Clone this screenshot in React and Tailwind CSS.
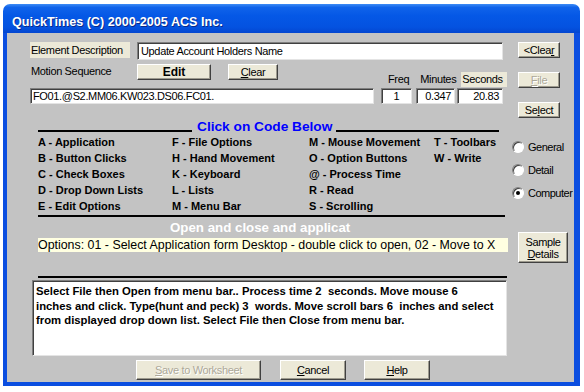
import React from "react";

const FONT = { fontFamily: '"Liberation Sans", Arial, sans-serif' };

function Btn({ children, className = "", disabled = false, bold = false }) {
  return (
    <div
      className={
        "flex items-center justify-center bg-[#ece9d8] border border-t-white border-l-white border-r-[#404040] border-b-[#404040] shadow-[inset_-1px_-1px_0_#9d9a8e] leading-[12px] text-center whitespace-nowrap " +
        (disabled ? "text-[#aca899] [text-shadow:1px_1px_0_#fff] " : "text-black ") +
        (bold ? "font-bold text-[12px] " : "text-[11px] tracking-[-0.35px] ") +
        className
      }
    >
      {children}
    </div>
  );
}

function Input({ children, className = "" }) {
  return (
    <div
      className={
        "bg-white border border-t-[#7f7f7f] border-l-[#7f7f7f] border-r-[#e4e4e4] border-b-[#e4e4e4] shadow-[inset_1px_1px_0_#404040] text-[11px] tracking-[-0.35px] leading-[14px] text-black overflow-hidden whitespace-nowrap " +
        className
      }
    >
      {children}
    </div>
  );
}

function Radio({ label, checked }) {
  return (
    <div className="flex items-center h-[14px]">
      <div className="w-[12px] h-[12px] rounded-full bg-white border border-t-[#808080] border-l-[#808080] border-r-white border-b-white shadow-[inset_1px_1px_0_#404040] flex items-center justify-center">
        {checked && <div className="w-[4px] h-[4px] rounded-full bg-black" />}
      </div>
      <span className="ml-[4px] text-[11px] tracking-[-0.5px] leading-[14px] text-black whitespace-nowrap">{label}</span>
    </div>
  );
}

const codes = [
  ["A - Application", "F - File Options", "M - Mouse Movement", "T - Toolbars"],
  ["B - Button Clicks", "H - Hand Movement", "O - Option Buttons", "W - Write"],
  ["C - Check Boxes", "K - Keyboard", "@ - Process Time", ""],
  ["D - Drop Down Lists", "L - Lists", "R - Read", ""],
  ["E - Edit Options", "M - Menu Bar", "S - Scrolling", ""],
];

export default function App() {
  return (
    <div className="w-[584px] h-[392px] bg-white overflow-hidden" style={FONT}>
      <div className="ml-[3px] mt-[4px] w-[577px] h-[382px] flex flex-col rounded-t-[7px] overflow-hidden">
        {/* Title bar */}
        <div className="h-[29px] shrink-0 flex items-center pl-[9px] bg-[linear-gradient(to_bottom,#3d8bf5_0%,#1063ea_12%,#0558e6_40%,#0452e0_80%,#0346d0_100%)]">
          <span className="text-white font-bold text-[12.6px] leading-[16px] mt-[6px] whitespace-nowrap [text-shadow:1px_1px_0_#0a2a8a]">
            QuickTimes (C) 2000-2005 ACS Inc.
          </span>
        </div>
        {/* Body */}
        <div className="flex-1 flex bg-[#c3c3c3] border-l-[4px] border-r-[6px] border-b-[4px] border-[#0b4ee0]">
          {/* Left column */}
          <div className="ml-[23px] w-[478px] flex flex-col pt-[9px]">
            {/* Row 1 */}
            <div className="flex items-start h-[18px]">
              <div className="w-[100px] h-[16px] bg-[#ece9d8] text-[11px] tracking-[-0.35px] leading-[16px] pl-[1px] text-black whitespace-nowrap overflow-hidden">
                Element Description
              </div>
              <Input className="ml-[7px] w-[366px] h-[18px] pl-[3px] leading-[16px]">
                Update Account Holders Name
              </Input>
            </div>
            {/* Row 2 */}
            <div className="flex items-start h-[23px] mt-[4px]">
              <div className="w-[107px] text-[11px] tracking-[-0.35px] leading-[14px] pl-[1px] text-black whitespace-nowrap">
                Motion Sequence
              </div>
              <Btn bold className="w-[74px] h-[16px]">Edit</Btn>
              <Btn className="ml-[17px] w-[50px] h-[16px]">
                <span className="underline">C</span>lear
              </Btn>
              <div className="ml-[110px] mt-[8px] text-[11px] tracking-[-0.35px] leading-[14px] text-black">Freq</div>
              <div className="ml-[11px] mt-[8px] text-[11px] tracking-[-0.35px] leading-[14px] text-black">Minutes</div>
              <div className="ml-[5px] mt-[8px] w-[46px] h-[15px] bg-[#ece9d8] text-[11px] tracking-[-0.35px] leading-[15px] pl-[1px] text-black whitespace-nowrap">
                Seconds
              </div>
            </div>
            {/* Row 3 */}
            <div className="flex items-start h-[16px] mt-[1px]">
              <Input className="w-[344px] h-[16px] pl-[2px]">FO01.@S2.MM06.KW023.DS06.FC01.</Input>
              <Input className="ml-[7px] w-[31px] h-[16px] text-center">1</Input>
              <Input className="ml-[4px] w-[39px] h-[16px] text-right pr-[3px]">0.347</Input>
              <Input className="ml-[2px] w-[46px] h-[16px] text-right pr-[3px]">20.83</Input>
            </div>
            {/* Header */}
            <div className="flex items-end h-[13px] mt-[17px] ml-[8px] w-[461px]">
              <div className="w-[154px] h-[2px] bg-black mb-[2px]" />
              <div className="ml-[5px] text-[#0000ff] font-bold text-[13.7px] leading-[14px] whitespace-nowrap">
                Click on Code Below
              </div>
              <div className="ml-[4px] flex-1 h-[2px] bg-black mb-[2px]" />
            </div>
            {/* Code grid */}
            <div className="ml-[8px] grid grid-cols-[134px_137px_125px_70px]">
              {codes.map((row, i) =>
                row.map((c, j) => (
                  <div key={i + "-" + j} className="h-[16px] text-[11px] leading-[16px] font-bold text-black whitespace-nowrap">
                    {c}
                  </div>
                ))
              )}
            </div>
            {/* Separator */}
            <div className="ml-[8px] mt-[1px] w-[467px] h-[2px] bg-black" />
            <div className="ml-[8px] w-[467px] h-[17px] mt-[2px] flex">
              <div className="ml-[132px] whitespace-nowrap text-white font-bold text-[13.3px] leading-[17px]">
                Open and close and applicat
              </div>
            </div>
            <div className="ml-[8px] mt-[2px] w-[470px] h-[14px] bg-[#ffffe1] text-[12.4px] leading-[14px] text-black whitespace-nowrap overflow-hidden">
              Options: 01 - Select Application form Desktop - double click to open, 02 - Move to X
            </div>
            <div className="ml-[8px] mt-[24px] w-[469px] h-[2px] bg-black" />
            {/* Textarea */}
            <div className="ml-[2px] mt-[2px] w-[475px] h-[76px] bg-white border border-t-[#7f7f7f] border-l-[#7f7f7f] border-r-[#e4e4e4] border-b-[#e4e4e4] shadow-[inset_1px_1px_0_#404040] pl-[3px] pt-[3px] overflow-hidden">
              <div className="text-[11.3px] leading-[14.5px] font-bold text-black whitespace-pre">
                {"Select File then Open from menu bar.. Process time 2  seconds. Move mouse 6\ninches and click. Type(hunt and peck) 3  words. Move scroll bars 6  inches and select\nfrom displayed drop down list. Select File then Close from menu bar."}
              </div>
            </div>
            {/* Bottom buttons */}
            <div className="flex mt-[4px] ml-[106px]">
              <Btn disabled className="w-[125px] h-[20px]">
                <span className="underline">S</span>ave to Worksheet
              </Btn>
              <Btn className="ml-[19px] w-[66px] h-[20px]">
                <span className="underline">C</span>ancel
              </Btn>
              <Btn className="ml-[18px] w-[66px] h-[20px]">
                <span className="underline">H</span>elp
              </Btn>
            </div>
          </div>
          {/* Right column */}
          <div className="ml-[4px] flex flex-col pt-[9px]">
            <Btn className="ml-[6px] w-[42px] h-[16px]">
              &lt;Clea<span className="underline">r</span>
            </Btn>
            <Btn disabled className="ml-[6px] mt-[14px] w-[42px] h-[16px]">
              <span className="underline">F</span>ile
            </Btn>
            <Btn className="ml-[6px] mt-[14px] w-[42px] h-[16px]">
              Se<span className="underline">l</span>ect
            </Btn>
            <div className="mt-[22px] flex flex-col gap-[9px]">
              <Radio label="General" />
              <Radio label="Detail" />
              <Radio label="Computer" checked />
            </div>
            <Btn className="ml-[6px] mt-[32px] w-[50px] h-[31px] flex-col">
              <span>Sample</span>
              <span>
                <span className="underline">D</span>etails
              </span>
            </Btn>
          </div>
        </div>
      </div>
    </div>
  );
}
